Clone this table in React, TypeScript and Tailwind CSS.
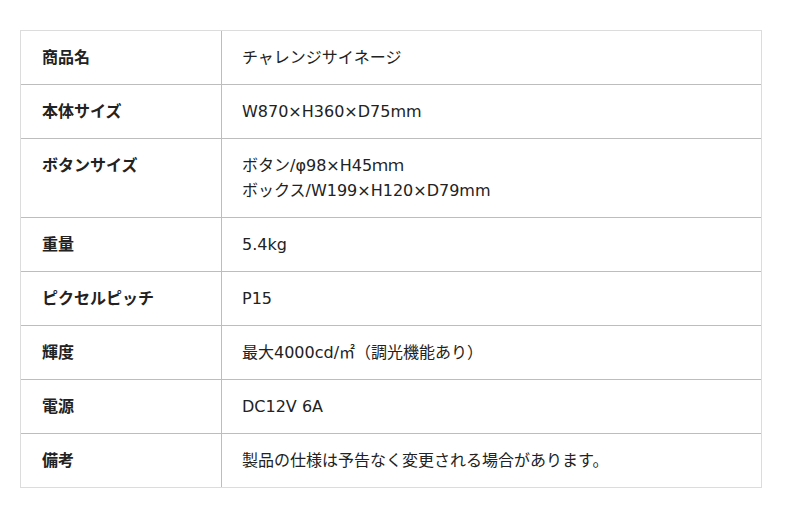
import React from 'react';

interface Spec {
  label: string;
  lines: string[];
}

const specs: Spec[] = [
  { label: '商品名', lines: ['チャレンジサイネージ'] },
  { label: '本体サイズ', lines: ['W870×H360×D75mm'] },
  { label: 'ボタンサイズ', lines: ['ボタン/φ98×H45ｍｍ', 'ボックス/W199×H120×D79mm'] },
  { label: '重量', lines: ['5.4kg'] },
  { label: 'ピクセルピッチ', lines: ['P15'] },
  { label: '輝度', lines: ['最大4000cd/㎡（調光機能あり）'] },
  { label: '電源', lines: ['DC12V 6A'] },
  { label: '備考', lines: ['製品の仕様は予告なく変更される場合があります。'] },
];

const App: React.FC = () => {
  return (
    <div
      className="w-[800px] h-[518px] bg-white pt-[30px] pl-[20px] text-[#222] text-[16px] leading-[25px]"
      style={{ fontFamily: '"DejaVu Sans", "Noto Sans CJK JP", sans-serif' }}
    >
      <div className="w-[742px] border-t border-l border-r border-[#dcdcdc]">
        {specs.map((spec, i) => (
          <div
            key={spec.label}
            className={
              i === specs.length - 1
                ? 'flex border-b border-[#dcdcdc]'
                : 'flex border-b border-[#bdbdbd]'
            }
          >
            <div className="w-[201px] shrink-0 border-r border-[#bdbdbd] px-[21px] py-[14px] font-bold">
              {spec.label}
            </div>
            <div className="flex-1 px-[20px] py-[14px]">
              {spec.lines.map((line) => (
                <div key={line}>{line}</div>
              ))}
            </div>
          </div>
        ))}
      </div>
    </div>
  );
};

export default App;
